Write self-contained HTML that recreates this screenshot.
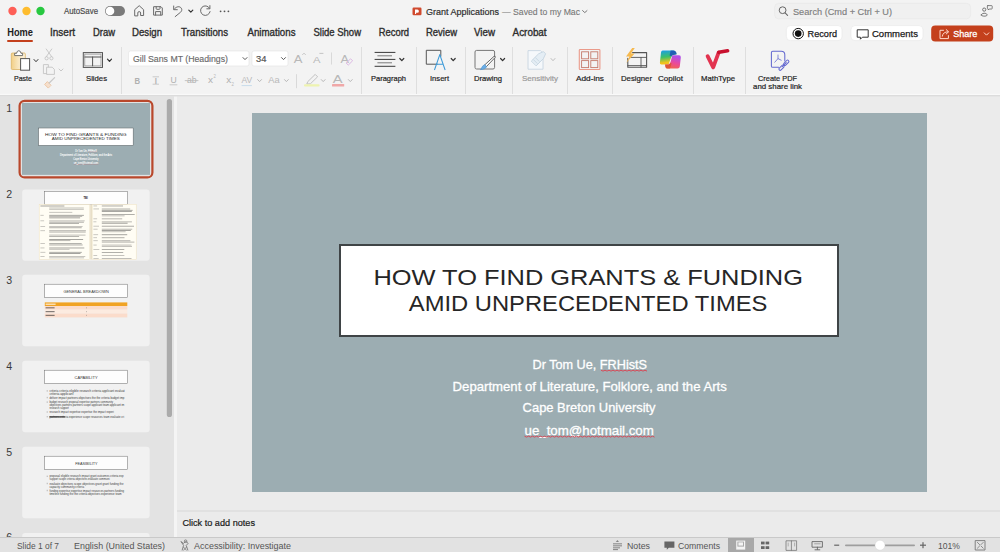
<!DOCTYPE html>
<html><head><meta charset="utf-8"><title>PowerPoint</title>
<style>html,body{margin:0;padding:0;width:1000px;height:552px;overflow:hidden;background:#ebebeb;font-family:"Liberation Sans",sans-serif}svg{display:block}</style>
</head><body>
<svg width="1000" height="552" viewBox="0 0 1000 552">
<rect x="0" y="0" width="1000" height="552" rx="0" fill="#ebebeb"/>
<rect x="0" y="0" width="1000" height="95" rx="0" fill="#f3f3f3"/>
<rect x="0" y="93.8" width="1000" height="1.2" rx="0" fill="#f9f9f9"/>
<rect x="0" y="95" width="1000" height="1.6" rx="0" fill="#dcdcdc"/>
<rect x="0" y="96.6" width="174" height="441" rx="0" fill="#e3e3e3"/>
<rect x="174" y="96.6" width="3" height="441" rx="0" fill="#f4f4f4"/>
<rect x="177" y="96.6" width="823" height="441" rx="0" fill="#ebebeb"/>
<rect x="177" y="510.5" width="823" height="1" rx="0" fill="#d8d8d8"/>
<circle cx="12.5" cy="11" r="4.2" fill="#fe5f57"/>
<circle cx="26.5" cy="11" r="4.2" fill="#febc2e"/>
<circle cx="40.5" cy="11" r="4.2" fill="#28c840"/>
<text x="64" y="13.9" font-size="8.4" fill="#4a4a4a" font-weight="normal" font-family="Liberation Sans" textLength="34" lengthAdjust="spacingAndGlyphs" stroke="#4a4a4a" stroke-width="0.18">AutoSave</text>
<rect x="105" y="6" width="20" height="10" rx="5" fill="#7a7a7a"/>
<circle cx="110" cy="11" r="4.3" fill="#fff"/>
<rect x="413" y="8" width="8" height="7" rx="1" fill="#c5422a"/>
<text x="426" y="15.2" font-size="9.7" fill="#2e2e2e" font-weight="normal" font-family="Liberation Sans" textLength="73" lengthAdjust="spacingAndGlyphs" stroke="#2e2e2e" stroke-width="0.2">Grant Applications</text>
<text x="502" y="15.2" font-size="9.7" fill="#777" font-weight="normal" font-family="Liberation Sans" textLength="78" lengthAdjust="spacingAndGlyphs" stroke="#777" stroke-width="0.12">— Saved to my Mac</text>
<path d="M582.6,10.6 L584.8,12.6 L587,10.6" fill="none" stroke="#777" stroke-width="1" stroke-linecap="round"/>
<rect x="774.6" y="3.4" width="196" height="15.4" rx="4" fill="#f0f0f0" stroke="#e5e5e5" stroke-width="0.6"/>
<text x="793" y="15.2" font-size="9" fill="#7e7e7e" font-weight="normal" font-family="Liberation Sans" textLength="99" lengthAdjust="spacingAndGlyphs" stroke="#7e7e7e" stroke-width="0.15">Search (Cmd + Ctrl + U)</text>
<text x="7.3" y="35.8" font-size="10.2" fill="#1e1e1e" font-weight="bold" font-family="Liberation Sans" textLength="25.7" lengthAdjust="spacingAndGlyphs">Home</text>
<text x="50" y="35.8" font-size="10.2" fill="#2e2e2e" font-weight="normal" font-family="Liberation Sans" textLength="25" lengthAdjust="spacingAndGlyphs" stroke="#2e2e2e" stroke-width="0.35">Insert</text>
<text x="93" y="35.8" font-size="10.2" fill="#2e2e2e" font-weight="normal" font-family="Liberation Sans" textLength="22" lengthAdjust="spacingAndGlyphs" stroke="#2e2e2e" stroke-width="0.35">Draw</text>
<text x="132" y="35.8" font-size="10.2" fill="#2e2e2e" font-weight="normal" font-family="Liberation Sans" textLength="30" lengthAdjust="spacingAndGlyphs" stroke="#2e2e2e" stroke-width="0.35">Design</text>
<text x="181" y="35.8" font-size="10.2" fill="#2e2e2e" font-weight="normal" font-family="Liberation Sans" textLength="47" lengthAdjust="spacingAndGlyphs" stroke="#2e2e2e" stroke-width="0.35">Transitions</text>
<text x="247.5" y="35.8" font-size="10.2" fill="#2e2e2e" font-weight="normal" font-family="Liberation Sans" textLength="48.0" lengthAdjust="spacingAndGlyphs" stroke="#2e2e2e" stroke-width="0.35">Animations</text>
<text x="313.5" y="35.8" font-size="10.2" fill="#2e2e2e" font-weight="normal" font-family="Liberation Sans" textLength="47.5" lengthAdjust="spacingAndGlyphs" stroke="#2e2e2e" stroke-width="0.35">Slide Show</text>
<text x="378.7" y="35.8" font-size="10.2" fill="#2e2e2e" font-weight="normal" font-family="Liberation Sans" textLength="30.30000000000001" lengthAdjust="spacingAndGlyphs" stroke="#2e2e2e" stroke-width="0.35">Record</text>
<text x="426" y="35.8" font-size="10.2" fill="#2e2e2e" font-weight="normal" font-family="Liberation Sans" textLength="31" lengthAdjust="spacingAndGlyphs" stroke="#2e2e2e" stroke-width="0.35">Review</text>
<text x="474" y="35.8" font-size="10.2" fill="#2e2e2e" font-weight="normal" font-family="Liberation Sans" textLength="21" lengthAdjust="spacingAndGlyphs" stroke="#2e2e2e" stroke-width="0.35">View</text>
<text x="512.6" y="35.8" font-size="10.2" fill="#2e2e2e" font-weight="normal" font-family="Liberation Sans" textLength="34.0" lengthAdjust="spacingAndGlyphs" stroke="#2e2e2e" stroke-width="0.35">Acrobat</text>
<rect x="7" y="40" width="26" height="2" rx="1" fill="#c4401c"/>
<rect x="786.4" y="25.6" width="55.6" height="15" rx="4" fill="#ffffff" stroke="#e6e6e6" stroke-width="0.6"/>
<rect x="851" y="25.6" width="72" height="15" rx="4" fill="#ffffff" stroke="#e6e6e6" stroke-width="0.6"/>
<rect x="931.2" y="25.4" width="62" height="16.2" rx="4" fill="#c4401c"/>
<text x="807.6" y="37.2" font-size="9.8" fill="#1a1a1a" font-weight="normal" font-family="Liberation Sans" textLength="29.399999999999977" lengthAdjust="spacingAndGlyphs" stroke="#1a1a1a" stroke-width="0.25">Record</text>
<text x="872" y="37.2" font-size="9.8" fill="#1a1a1a" font-weight="normal" font-family="Liberation Sans" textLength="46" lengthAdjust="spacingAndGlyphs" stroke="#1a1a1a" stroke-width="0.25">Comments</text>
<text x="953.2" y="37.2" font-size="9.8" fill="#fff" font-weight="normal" font-family="Liberation Sans" textLength="24.199999999999932" lengthAdjust="spacingAndGlyphs" stroke="#fff" stroke-width="0.3">Share</text>
<text x="14" y="81" font-size="8.0" fill="#1e1e1e" font-weight="normal" font-family="Liberation Sans" textLength="18" lengthAdjust="spacingAndGlyphs" stroke="#1e1e1e" stroke-width="0.2">Paste</text>
<text x="86" y="81" font-size="8.0" fill="#1e1e1e" font-weight="normal" font-family="Liberation Sans" textLength="21" lengthAdjust="spacingAndGlyphs" stroke="#1e1e1e" stroke-width="0.2">Slides</text>
<text x="371" y="81" font-size="8.0" fill="#1e1e1e" font-weight="normal" font-family="Liberation Sans" textLength="35" lengthAdjust="spacingAndGlyphs" stroke="#1e1e1e" stroke-width="0.2">Paragraph</text>
<text x="430" y="81" font-size="8.0" fill="#1e1e1e" font-weight="normal" font-family="Liberation Sans" textLength="19" lengthAdjust="spacingAndGlyphs" stroke="#1e1e1e" stroke-width="0.2">Insert</text>
<text x="474" y="81" font-size="8.0" fill="#1e1e1e" font-weight="normal" font-family="Liberation Sans" textLength="28" lengthAdjust="spacingAndGlyphs" stroke="#1e1e1e" stroke-width="0.2">Drawing</text>
<text x="576" y="81" font-size="8.0" fill="#1e1e1e" font-weight="normal" font-family="Liberation Sans" textLength="28" lengthAdjust="spacingAndGlyphs" stroke="#1e1e1e" stroke-width="0.2">Add-ins</text>
<text x="621" y="81" font-size="8.0" fill="#1e1e1e" font-weight="normal" font-family="Liberation Sans" textLength="31" lengthAdjust="spacingAndGlyphs" stroke="#1e1e1e" stroke-width="0.2">Designer</text>
<text x="658" y="81" font-size="8.0" fill="#1e1e1e" font-weight="normal" font-family="Liberation Sans" textLength="25" lengthAdjust="spacingAndGlyphs" stroke="#1e1e1e" stroke-width="0.2">Copilot</text>
<text x="701" y="81" font-size="8.0" fill="#1e1e1e" font-weight="normal" font-family="Liberation Sans" textLength="34" lengthAdjust="spacingAndGlyphs" stroke="#1e1e1e" stroke-width="0.2">MathType</text>
<text x="758" y="81" font-size="8.0" fill="#1e1e1e" font-weight="normal" font-family="Liberation Sans" textLength="39" lengthAdjust="spacingAndGlyphs" stroke="#1e1e1e" stroke-width="0.2">Create PDF</text>
<text x="522" y="81" font-size="8.0" fill="#9a9a9a" font-weight="normal" font-family="Liberation Sans" textLength="36" lengthAdjust="spacingAndGlyphs" stroke="#9a9a9a" stroke-width="0.2">Sensitivity</text>
<text x="753" y="88.6" font-size="8.0" fill="#1e1e1e" font-weight="normal" font-family="Liberation Sans" textLength="49" lengthAdjust="spacingAndGlyphs" stroke="#1e1e1e" stroke-width="0.2">and share link</text>
<rect x="72" y="47" width="1" height="47" rx="0" fill="#dedede"/>
<rect x="121" y="47" width="1" height="47" rx="0" fill="#dedede"/>
<rect x="361" y="47" width="1" height="47" rx="0" fill="#dedede"/>
<rect x="416" y="47" width="1" height="47" rx="0" fill="#dedede"/>
<rect x="465" y="47" width="1" height="47" rx="0" fill="#dedede"/>
<rect x="512" y="47" width="1" height="47" rx="0" fill="#dedede"/>
<rect x="567" y="47" width="1" height="47" rx="0" fill="#dedede"/>
<rect x="612" y="47" width="1" height="47" rx="0" fill="#dedede"/>
<rect x="693" y="47" width="1" height="47" rx="0" fill="#dedede"/>
<rect x="745" y="47" width="1" height="47" rx="0" fill="#dedede"/>
<rect x="128.5" y="51" width="120.5" height="15" rx="2" fill="#ffffff" stroke="#e3e3e3" stroke-width="0.6"/>
<text x="133" y="62" font-size="9.5" fill="#6a6a6a" font-weight="normal" font-family="Liberation Sans" textLength="95" lengthAdjust="spacingAndGlyphs" stroke="#6a6a6a" stroke-width="0.15">Gill Sans MT (Headings)</text>
<rect x="252" y="51" width="36" height="15" rx="2" fill="#ffffff" stroke="#e3e3e3" stroke-width="0.6"/>
<text x="256" y="62" font-size="9.5" fill="#555" font-weight="normal" font-family="Liberation Sans" textLength="10.399999999999977" lengthAdjust="spacingAndGlyphs" stroke="#555" stroke-width="0.2">34</text>
<g id="s1">
<rect x="252" y="113" width="675" height="379" rx="0" fill="#9cadb2"/>
<rect x="340" y="245" width="498" height="91" rx="0" fill="#ffffff" stroke="#3f4446" stroke-width="2"/>
<text x="373.4" y="285.3" font-size="22.4" fill="#262626" font-weight="normal" font-family="Liberation Sans" textLength="429.6" lengthAdjust="spacingAndGlyphs">HOW TO FIND GRANTS &amp; FUNDING</text>
<text x="408.8" y="310.8" font-size="22.4" fill="#262626" font-weight="normal" font-family="Liberation Sans" textLength="358.59999999999997" lengthAdjust="spacingAndGlyphs">AMID UNPRECEDENTED TIMES</text>
<text x="532.5" y="369" font-size="13.5" fill="#ffffff" font-weight="normal" font-family="Liberation Sans" textLength="114.5" lengthAdjust="spacingAndGlyphs" stroke="#ffffff" stroke-width="0.3">Dr Tom Ue, FRHistS</text>
<text x="452.6" y="390.5" font-size="13.5" fill="#ffffff" font-weight="normal" font-family="Liberation Sans" textLength="274.19999999999993" lengthAdjust="spacingAndGlyphs" stroke="#ffffff" stroke-width="0.3">Department of Literature, Folklore, and the Arts</text>
<text x="522.6" y="412.4" font-size="13.5" fill="#ffffff" font-weight="normal" font-family="Liberation Sans" textLength="133.0" lengthAdjust="spacingAndGlyphs" stroke="#ffffff" stroke-width="0.3">Cape Breton University</text>
<text x="524.5" y="434.6" font-size="13.5" fill="#ffffff" font-weight="normal" font-family="Liberation Sans" textLength="129.29999999999995" lengthAdjust="spacingAndGlyphs" stroke="#ffffff" stroke-width="0.3">ue_tom@hotmail.com</text>
<path d="M601,370.2 L603.0,371.1 L605.0,370.2 L607.0,371.1 L609.0,370.2 L611.0,371.1 L613.0,370.2 L615.0,371.1 L617.0,370.2 L619.0,371.1 L621.0,370.2 L623.0,371.1 L625.0,370.2 L627.0,371.1 L629.0,370.2 L631.0,371.1 L633.0,370.2 L635.0,371.1 L637.0,370.2 L639.0,371.1 L641.0,370.2 L643.0,371.1 L645.0,370.2 L647.0,371.1" fill="none" stroke="#d64a58" stroke-width="1"/>
<path d="M524.5,436.2 L526.5,437.1 L528.5,436.2 L530.5,437.1 L532.5,436.2 L534.5,437.1 L536.5,436.2 L538.5,437.1 L540.5,436.2 L542.5,437.1 L544.5,436.2 L546.5,437.1 L548.5,436.2 L550.5,437.1 L552.5,436.2 L554.5,437.1 L556.5,436.2 L558.5,437.1 L560.5,436.2 L562.5,437.1 L564.5,436.2 L566.5,437.1 L568.5,436.2 L570.5,437.1 L572.5,436.2 L574.5,437.1 L576.5,436.2 L578.5,437.1 L580.5,436.2 L582.5,437.1 L584.5,436.2 L586.5,437.1 L588.5,436.2 L590.5,437.1 L592.5,436.2 L594.5,437.1 L596.5,436.2 L598.5,437.1 L600.5,436.2 L602.5,437.1 L604.5,436.2 L606.5,437.1 L608.5,436.2 L610.5,437.1 L612.5,436.2 L614.5,437.1 L616.5,436.2 L618.5,437.1 L620.5,436.2 L622.5,437.1 L624.5,436.2 L626.5,437.1 L628.5,436.2 L630.5,437.1 L632.5,436.2 L634.5,437.1 L636.5,436.2 L638.5,437.1 L640.5,436.2 L642.5,437.1 L644.5,436.2 L646.5,437.1 L648.5,436.2 L650.5,437.1 L652.5,436.2 L654.5,437.1" fill="none" stroke="#d64a58" stroke-width="1"/>
</g>
<text x="182.4" y="526" font-size="9.6" fill="#1a1a1a" font-weight="normal" font-family="Liberation Sans" textLength="72.6" lengthAdjust="spacingAndGlyphs" stroke="#1a1a1a" stroke-width="0.2">Click to add notes</text>
<path d="M134.7,15.5 V9.7 L139.2,5.7 L143.6,9.7 V15.5 H140.6 V13 A1.4,1.4 0 0 0 137.8,13 V15.5 Z" fill="none" stroke="#6a6a6a" stroke-width="1" stroke-linecap="round" stroke-linejoin="round"/>
<path d="M154,6.7 H161 L162.3,8 V15.1 H154 Z" fill="none" stroke="#6a6a6a" stroke-width="1" stroke-linecap="round" stroke-linejoin="round"/>
<path d="M156.2,6.8 V8.6 Q156.2,9.3 156.9,9.3 H159.3 Q160,9.3 160,8.6 V6.8" fill="none" stroke="#6a6a6a" stroke-width="1" stroke-linecap="round" stroke-linejoin="round"/>
<path d="M155.6,15 V11.6 H160.7 V15" fill="none" stroke="#6a6a6a" stroke-width="1" stroke-linecap="round" stroke-linejoin="round"/>
<path d="M174.2,9.2 C176,6.4 179.8,5.8 181.3,8.2 C182.3,9.8 181.6,11.2 180.6,12.2 L175.2,16.6" fill="none" stroke="#6a6a6a" stroke-width="1" stroke-linecap="round" stroke-linejoin="round"/>
<path d="M173.7,6 V9.7 H177.3" fill="none" stroke="#6a6a6a" stroke-width="1" stroke-linecap="round" stroke-linejoin="round"/>
<path d="M188.8,10.2 L190.8,12.2 L192.8,10.2" fill="none" stroke="#333" stroke-width="1.2" stroke-linecap="round" stroke-linejoin="round"/>
<path d="M209.6,8.3 A4.8,4.8 0 1 0 210.1,11.6" fill="none" stroke="#6a6a6a" stroke-width="1" stroke-linecap="round" stroke-linejoin="round"/>
<path d="M209.9,5.6 V8.8 H206.8" fill="none" stroke="#6a6a6a" stroke-width="1" stroke-linecap="round" stroke-linejoin="round"/>
<circle cx="220.6" cy="11.3" r="0.9" fill="#555"/>
<circle cx="224.5" cy="11.3" r="0.9" fill="#555"/>
<circle cx="228.4" cy="11.3" r="0.9" fill="#555"/>
<rect x="412.5" y="7.6" width="9" height="7.6" rx="1.2" fill="#d04a2e"/>
<path d="M415,9.6 h2.3 a1.6,1.6 0 0 1 0,3.2 h-1.2 v1.3 h-1.1 z" fill="#fff"/>
<circle cx="782.6" cy="10.2" r="3.4" fill="none" stroke="#666" stroke-width="1"/>
<path d="M785.1,12.8 L787.6,15.4" fill="none" stroke="#666" stroke-width="1.1" stroke-linecap="round" stroke-linejoin="round"/>
<circle cx="984.2" cy="9.6" r="1.6" fill="none" stroke="#666" stroke-width="0.9"/>
<path d="M981.3,15 C981.3,12.6 987.1,12.6 987.1,15 C987.1,16.6 981.3,16.6 981.3,15 Z" fill="none" stroke="#666" stroke-width="0.9" stroke-linecap="round" stroke-linejoin="round"/>
<path d="M987.8,5.6 H991.6 Q992.2,5.6 992.2,6.2 V8.4 Q992.2,9 991.6,9 H989.2 L988.3,10 V9 Q987.4,9 987.4,8.4 V6.2 Q987.4,5.6 987.8,5.6 Z" fill="none" stroke="#666" stroke-width="0.8" stroke-linecap="round" stroke-linejoin="round"/>
<circle cx="798.2" cy="33.6" r="5.2" fill="none" stroke="#111" stroke-width="1"/>
<circle cx="798.2" cy="33.6" r="3.3" fill="#111"/>
<path d="M857.6,29.8 H868.2 V37.2 H862.4 L860.4,39.2 V37.2 H857.6 Z" fill="none" stroke="#333" stroke-width="1" stroke-linecap="round" stroke-linejoin="round"/>
<path d="M943.5,30.3 H940 V38.6 H948.4 V35.6" fill="none" stroke="#ffd9cc" stroke-width="1" stroke-linecap="round" stroke-linejoin="round"/>
<path d="M942.3,36.2 C942.8,33 945,31.8 948,31.8 M946.2,29.6 L948.6,31.8 L946.2,34" fill="none" stroke="#ffd9cc" stroke-width="1" stroke-linecap="round" stroke-linejoin="round"/>
<path d="M984.2,32.85 L986.5,35.15 L988.8,32.85" fill="none" stroke="#ffd9cc" stroke-width="1" stroke-linecap="round" stroke-linejoin="round"/>
<defs><linearGradient id="clipg" x1="0" y1="0" x2="1" y2="0"><stop offset="0" stop-color="#f2cf86"/><stop offset="0.5" stop-color="#f8e6c0"/><stop offset="1" stop-color="#fbf1dc"/></linearGradient></defs>
<rect x="11.3" y="53" width="14" height="16.5" rx="1" fill="url(#clipg)" stroke="#dcb466" stroke-width="0.8"/>
<path d="M14.6,55.2 V53.3 H16.6 Q17,50.7 18.8,50.7 Q20.6,50.7 21,53.3 H22.6 V55.2 Z" fill="#fff" stroke="#666" stroke-width="0.9" stroke-linecap="round" stroke-linejoin="round"/>
<rect x="20.6" y="58.6" width="9" height="11.6" fill="#fff" stroke="#555" stroke-width="1"/>
<path d="M34.0,59.5 L36,61.7 L38.0,59.5" fill="none" stroke="#333" stroke-width="1.0" stroke-linecap="round" stroke-linejoin="round"/>
<path d="M46.2,49 L51.8,56.8 M51.8,49 L46.2,56.8" fill="none" stroke="#c4c4c4" stroke-width="0.9" stroke-linecap="round" stroke-linejoin="round"/>
<circle cx="46.6" cy="58.3" r="1.6" fill="none" stroke="#c4c4c4" stroke-width="0.9"/>
<circle cx="51.4" cy="58.3" r="1.6" fill="none" stroke="#c4c4c4" stroke-width="0.9"/>
<path d="M43.8,64.6 H48.4 V73.6 H43.8 Z" fill="none" stroke="#c4c4c4" stroke-width="0.9" stroke-linecap="round" stroke-linejoin="round"/>
<path d="M47,67.2 H52.2 L54.4,69.4 V74.4 H47 Z" fill="#f3f3f3" stroke="#c4c4c4" stroke-width="0.9" stroke-linecap="round" stroke-linejoin="round"/>
<path d="M59.0,69.0 L61,71.0 L63.0,69.0" fill="none" stroke="#c8c8c8" stroke-width="1" stroke-linecap="round" stroke-linejoin="round"/>
<path d="M48,87.8 L44.6,84.4 L47.4,81.6 L50.8,85 Z" fill="#f6dfcc" stroke="#ecc8a8" stroke-width="1" stroke-linecap="round" stroke-linejoin="round"/>
<path d="M49.2,83 L54.6,77.6" fill="none" stroke="#c8c8c8" stroke-width="1.2" stroke-linecap="round" stroke-linejoin="round"/>
<rect x="83.3" y="52.6" width="19.2" height="14.8" fill="none" stroke="#555" stroke-width="1"/>
<rect x="84.8" y="54.1" width="16.2" height="11.8" fill="none" stroke="#888" stroke-width="0.7"/>
<path d="M84.8,57 H101 M92.6,57 V65.9" fill="none" stroke="#555" stroke-width="1" stroke-linecap="round" stroke-linejoin="round"/>
<path d="M107.5,59.199999999999996 L109.5,61.4 L111.5,59.199999999999996" fill="none" stroke="#333" stroke-width="1.2" stroke-linecap="round" stroke-linejoin="round"/>
<path d="M243.0,57.6 L245,59.6 L247.0,57.6" fill="none" stroke="#555" stroke-width="1" stroke-linecap="round" stroke-linejoin="round"/>
<path d="M281.5,57.6 L283.5,59.6 L285.5,57.6" fill="none" stroke="#555" stroke-width="1" stroke-linecap="round" stroke-linejoin="round"/>
<text x="293.8" y="63" font-size="11" fill="#b8b8b8" font-weight="normal" font-family="Liberation Sans" textLength="8.699999999999989" lengthAdjust="spacingAndGlyphs">A</text>
<path d="M302.6,54.6 L304,53.2 L305.4,54.6" fill="none" stroke="#b8b8b8" stroke-width="0.8" stroke-linecap="round" stroke-linejoin="round"/>
<text x="313" y="63" font-size="9.6" fill="#b8b8b8" font-weight="normal" font-family="Liberation Sans" textLength="7.5" lengthAdjust="spacingAndGlyphs">A</text>
<path d="M319.8,53.4 H323" fill="none" stroke="#b8b8b8" stroke-width="0.8" stroke-linecap="round" stroke-linejoin="round"/>
<rect x="331" y="52.5" width="0.9" height="12" rx="0" fill="#d6d6d6"/>
<text x="340.6" y="63" font-size="10.5" fill="#b8b8b8" font-weight="normal" font-family="Liberation Sans" textLength="8.399999999999977" lengthAdjust="spacingAndGlyphs">A</text>
<path d="M346.4,62.8 L350.6,58.8 L352.6,60.8 L348.6,64.8 Z" fill="none" stroke="#dcb8e4" stroke-width="1" stroke-linecap="round" stroke-linejoin="round"/>
<text x="134.6" y="83.6" font-size="9.2" fill="#b0b0b0" font-weight="bold" font-family="Liberation Sans" textLength="5.599999999999994" lengthAdjust="spacingAndGlyphs">B</text>
<text x="154.2" y="83.6" font-size="9.2" fill="#b0b0b0" font-weight="normal" font-family="Liberation Sans" textLength="3.200000000000017" lengthAdjust="spacingAndGlyphs">I</text>
<path d="M153,84.2 H158.6 M153,76.8 H158.6" fill="none" stroke="#b8b8b8" stroke-width="0.7" stroke-linecap="round" stroke-linejoin="round"/>
<text x="170.4" y="83" font-size="9.2" fill="#b0b0b0" font-weight="normal" font-family="Liberation Sans" textLength="6.199999999999989" lengthAdjust="spacingAndGlyphs">U</text>
<path d="M170,84.8 H177" fill="none" stroke="#b8b8b8" stroke-width="0.7" stroke-linecap="round" stroke-linejoin="round"/>
<text x="187" y="83.4" font-size="9.2" fill="#b0b0b0" font-weight="normal" font-family="Liberation Sans" textLength="9.599999999999994" lengthAdjust="spacingAndGlyphs">ab</text>
<path d="M185.2,80.6 H198" fill="none" stroke="#b8b8b8" stroke-width="0.8" stroke-linecap="round" stroke-linejoin="round"/>
<text x="208" y="83.4" font-size="9.6" fill="#b0b0b0" font-weight="normal" font-family="Liberation Sans" textLength="5" lengthAdjust="spacingAndGlyphs">x</text>
<text x="213.6" y="78.4" font-size="4.6" fill="#b8b8b8" font-weight="normal" font-family="Liberation Sans" textLength="2.4000000000000057" lengthAdjust="spacingAndGlyphs">2</text>
<text x="226.2" y="83.4" font-size="9.6" fill="#b0b0b0" font-weight="normal" font-family="Liberation Sans" textLength="5.0" lengthAdjust="spacingAndGlyphs">x</text>
<text x="231.6" y="86.4" font-size="4.6" fill="#b8b8b8" font-weight="normal" font-family="Liberation Sans" textLength="2.4000000000000057" lengthAdjust="spacingAndGlyphs">2</text>
<text x="241.5" y="82.6" font-size="9.6" fill="#b8b8b8" font-weight="normal" font-family="Liberation Sans" textLength="10.699999999999989" lengthAdjust="spacingAndGlyphs">AV</text>
<path d="M242,85.6 H251.5" fill="none" stroke="#c8dcea" stroke-width="1" stroke-linecap="round" stroke-linejoin="round"/>
<path d="M257.70000000000005,79.6 L259.6,81.6 L261.5,79.6" fill="none" stroke="#b8b8b8" stroke-width="1" stroke-linecap="round" stroke-linejoin="round"/>
<text x="268.2" y="83.4" font-size="9.8" fill="#b8b8b8" font-weight="normal" font-family="Liberation Sans" textLength="11.400000000000034" lengthAdjust="spacingAndGlyphs">Aa</text>
<path d="M284.5,79.6 L286.4,81.6 L288.29999999999995,79.6" fill="none" stroke="#b8b8b8" stroke-width="1" stroke-linecap="round" stroke-linejoin="round"/>
<rect x="296" y="74.2" width="0.9" height="14" rx="0" fill="#d6d6d6"/>
<path d="M308,81.4 L315.2,74.4 L317.6,76.8 L310.4,83.8 L307.2,84 Z" fill="none" stroke="#bcbcbc" stroke-width="0.9" stroke-linecap="round" stroke-linejoin="round"/>
<rect x="304" y="84.2" width="15.6" height="2.4" rx="1" fill="#eef3b0"/>
<path d="M321.3,79.6 L323.2,81.6 L325.09999999999997,79.6" fill="none" stroke="#b8b8b8" stroke-width="1" stroke-linecap="round" stroke-linejoin="round"/>
<text x="332.8" y="82.6" font-size="10" fill="#b8b8b8" font-weight="normal" font-family="Liberation Sans" textLength="9.800000000000011" lengthAdjust="spacingAndGlyphs">A</text>
<rect x="332" y="84" width="12.2" height="2.4" rx="0.5" fill="#f0a8a8"/>
<path d="M348.40000000000003,79.6 L350.3,81.6 L352.2,79.6" fill="none" stroke="#b8b8b8" stroke-width="1" stroke-linecap="round" stroke-linejoin="round"/>
<path d="M375,52.4 H395" fill="none" stroke="#3a3a3a" stroke-width="1" stroke-linecap="round" stroke-linejoin="round"/>
<path d="M377.8,55.8 H391.6" fill="none" stroke="#7a7a7a" stroke-width="1" stroke-linecap="round" stroke-linejoin="round"/>
<path d="M375,59.4 H395" fill="none" stroke="#3a3a3a" stroke-width="1" stroke-linecap="round" stroke-linejoin="round"/>
<path d="M377.8,62.8 H391.6" fill="none" stroke="#7a7a7a" stroke-width="1" stroke-linecap="round" stroke-linejoin="round"/>
<path d="M375,66.3 H395" fill="none" stroke="#3a3a3a" stroke-width="1" stroke-linecap="round" stroke-linejoin="round"/>
<path d="M399.8,58.5 L401.8,60.7 L403.8,58.5" fill="none" stroke="#333" stroke-width="1.2" stroke-linecap="round" stroke-linejoin="round"/>
<path d="M437.2,64.2 H426.3 V50.3 H440.8 V56.2" fill="none" stroke="#555" stroke-width="1" stroke-linecap="round" stroke-linejoin="round"/>
<path d="M434.6,69.6 L439.8,54.6 L445,69.6 M436.6,64.2 H443" fill="none" stroke="#3d9ad8" stroke-width="1.1" stroke-linecap="round" stroke-linejoin="round"/>
<path d="M451.2,58.5 L453.2,60.7 L455.2,58.5" fill="none" stroke="#333" stroke-width="1.2" stroke-linecap="round" stroke-linejoin="round"/>
<rect x="475" y="50.4" width="19.6" height="18.6" rx="1.6" fill="none" stroke="#777" stroke-width="1"/>
<path d="M484.6,65 L494,56.4 Q495.6,55.6 495.2,57.4 L486.4,66.6" fill="#fff" stroke="#555" stroke-width="0.9" stroke-linecap="round" stroke-linejoin="round"/>
<path d="M480.8,69.6 Q482,65.6 484.6,64.6 L486.6,66.6 Q485.6,69.4 480.8,69.6 Z" fill="#6aaee6" stroke="#4a8fcf" stroke-width="0.6" stroke-linecap="round" stroke-linejoin="round"/>
<path d="M500.6,58.5 L502.6,60.7 L504.6,58.5" fill="none" stroke="#333" stroke-width="1.2" stroke-linecap="round" stroke-linejoin="round"/>
<path d="M528.4,50.6 H540.4 L543,53.2 V69.2 H528.4 Z" fill="#f5f8fb" stroke="#c8d6e2" stroke-width="0.9" stroke-linecap="round" stroke-linejoin="round"/>
<path d="M531.6,60.8 L538.6,53.8 L543.4,51.6 L545.6,53.8 L543.4,58.6 L536.4,65.6 Z" fill="#e4edf4" stroke="#c4d4e0" stroke-width="0.9" stroke-linecap="round" stroke-linejoin="round"/>
<path d="M533.6,59.8 L537.2,63.4 M535.6,57.8 L539.2,61.4" fill="none" stroke="#c4d4e0" stroke-width="0.8" stroke-linecap="round" stroke-linejoin="round"/>
<path d="M551.0,58.5 L553,60.7 L555.0,58.5" fill="none" stroke="#bdbdbd" stroke-width="1" stroke-linecap="round" stroke-linejoin="round"/>
<rect x="579.3" y="49.5" width="20.6" height="20" rx="0.8" fill="none" stroke="#ea9a8a" stroke-width="1.1"/>
<rect x="581.6" y="51.8" width="7" height="7" fill="none" stroke="#c47a6c" stroke-width="0.9"/>
<rect x="590.8" y="51.8" width="7" height="7" fill="none" stroke="#c47a6c" stroke-width="0.9"/>
<rect x="581.6" y="60.6" width="7" height="7" fill="none" stroke="#c47a6c" stroke-width="0.9"/>
<rect x="590.8" y="60.6" width="7" height="7" fill="none" stroke="#c47a6c" stroke-width="0.9"/>
<path d="M632.6,52.6 H646.6 V67.2 H627.8 V58.4" fill="none" stroke="#555" stroke-width="1.1" stroke-linecap="round" stroke-linejoin="round"/>
<path d="M630.6,57.4 H646.6 M641,57.4 V67.2 M627.8,65.6 H646.6" fill="none" stroke="#555" stroke-width="0.9" stroke-linecap="round" stroke-linejoin="round"/>
<path d="M632.2,48 L626,56.6 L629.4,56.6 L626.2,63 L634.6,53.4 L631,53.4 L634.8,48 Z" fill="#f6b94f"/>
<defs><linearGradient id="cpl" x1="0" y1="0" x2="0.15" y2="1"><stop offset="0" stop-color="#1a9cec"/><stop offset="0.5" stop-color="#3cc06a"/><stop offset="0.9" stop-color="#f2c21c"/></linearGradient><linearGradient id="cpr" x1="0.3" y1="0" x2="0" y2="1"><stop offset="0" stop-color="#b24ee6"/><stop offset="0.45" stop-color="#ea4a9a"/><stop offset="1" stop-color="#f46a3a"/></linearGradient></defs>
<path d="M662.6,50.5 H673.4 Q675.4,50.5 676.2,52.6 L676.6,54.2 L673.2,55 Q671.8,55.4 671.2,57.2 L668.6,64.4 H661.4 Q659.6,64.4 659.9,62.4 L661,52.4 Q661.3,50.5 662.6,50.5 Z" fill="url(#cpl)"/>
<path d="M670.6,50.5 H673.4 Q675.4,50.5 676.2,52.6 L676.6,54.2 L673.2,55 Q672,55.3 671.4,56.4 L669.6,55.4 Z" fill="#1f4fb8" opacity="0.85"/>
<path d="M673.2,55.2 H679 Q681,55.2 680.8,57.4 L679.8,66.6 Q679.6,68.6 677.6,68.6 H667.6 Q665.8,68.6 665.5,67 L665.1,64.4 L668.6,64.4 Q669.8,64.2 670.4,62.6 L672,56.6 Q672.4,55.2 673.2,55.2 Z" fill="url(#cpr)"/>
<path d="M665.1,64.4 L668.6,64.4 Q669.8,64.2 670.4,62.6 L671.6,63.6 L670,68.6 H667.6 Q665.8,68.6 665.5,67 Z" fill="#d8542e" opacity="0.8"/>
<path d="M707.6,56.2 L713.2,67.4 L718.6,52.6" fill="none" stroke="#e2334f" stroke-width="3.8" stroke-linecap="round" stroke-linejoin="round"/>
<path d="M718.8,52.2 L727.6,50.8" fill="none" stroke="#c8102e" stroke-width="3.6" stroke-linecap="round" stroke-linejoin="round"/>
<path d="M778.6,67.3 H772.8 Q771.4,67.3 771.4,65.9 V52.6 Q771.4,51.2 772.8,51.2 H781.2 Q784.8,51.2 784.8,54.8 V61" fill="none" stroke="#6469d0" stroke-width="1.05" stroke-linecap="round" stroke-linejoin="round"/>
<path d="M778,55 V58.6 L774.8,62.2 M778,58.6 L781.2,60.2" fill="none" stroke="#6469d0" stroke-width="0.8" stroke-linecap="round" stroke-linejoin="round"/>
<path d="M780.2,69 L782.8,66.4" fill="none" stroke="#6469d0" stroke-width="3.6" stroke-linecap="round" stroke-linejoin="round"/>
<path d="M780.2,69 L782.8,66.4" fill="none" stroke="#f3f3f3" stroke-width="1.5" stroke-linecap="round" stroke-linejoin="round"/>
<path d="M784.8,64.2 L787.6,61.4" fill="none" stroke="#6469d0" stroke-width="3.6" stroke-linecap="round" stroke-linejoin="round"/>
<path d="M784.8,64.2 L787.6,61.4" fill="none" stroke="#f3f3f3" stroke-width="1.5" stroke-linecap="round" stroke-linejoin="round"/>
<path d="M782,66.8 L786.2,62.6" fill="none" stroke="#6469d0" stroke-width="1.05" stroke-linecap="round" stroke-linejoin="round"/>
<rect x="166.8" y="99" width="5.2" height="318" rx="2.6" fill="#ababab"/>
<rect x="19.6" y="100.8" width="132.8" height="76.6" rx="5" fill="none" stroke="#b9482c" stroke-width="2.2"/>
<g transform="translate(22,103) scale(0.18962962962962962) translate(-252,-113)"><use href="#s1"/></g>
<text x="9.2" y="112" font-size="10.6" fill="#3a3a3a" text-anchor="middle" font-family="Liberation Sans">1</text>
<rect x="22.2" y="189.4" width="127.4" height="71.4" rx="3" fill="#f1f1f1"/>
<text x="9.2" y="198.2" font-size="10.6" fill="#3a3a3a" text-anchor="middle" font-family="Liberation Sans">2</text>
<rect x="44.6" y="191.4" width="83" height="13.2" fill="#fdfdfd" stroke="#6a6a6a" stroke-width="0.5"/>
<text x="83.4" y="198.8" font-size="3.4" fill="#222" font-weight="bold" font-family="Liberation Sans" textLength="4.3999999999999915" lengthAdjust="spacingAndGlyphs">TBI</text>
<rect x="39.2" y="204.4" width="50.4" height="55" rx="0" fill="#fffdf4" stroke="#efe2bf" stroke-width="0.5"/>
<rect x="92.2" y="204.4" width="44" height="55" rx="0" fill="#fffdf4" stroke="#efe2bf" stroke-width="0.5"/>
<rect x="89.6" y="204.4" width="2.6" height="55" rx="0" fill="#f6efe0"/>
<rect x="90.8" y="204.4" width="0.5" height="55" rx="0" fill="#c8b890"/>
<rect x="40.4" y="205.60" width="24" height="0.8" fill="#333" opacity="0.55"/>
<rect x="49.2" y="207.60" width="34.6" height="0.75" fill="#333" opacity="0.36"/>
<rect x="49.2" y="208.90" width="34.6" height="0.75" fill="#333" opacity="0.37"/>
<rect x="49.2" y="211.90" width="23.1" height="0.75" fill="#333" opacity="0.37"/>
<rect x="40.4" y="214.90" width="3.3" height="0.7" fill="#444" opacity="0.4"/>
<rect x="49.2" y="214.90" width="34.7" height="0.75" fill="#333" opacity="0.56"/>
<rect x="49.2" y="216.20" width="33.0" height="0.75" fill="#333" opacity="0.41"/>
<rect x="49.2" y="217.50" width="30.9" height="0.75" fill="#333" opacity="0.59"/>
<rect x="40.4" y="220.50" width="3.7" height="0.7" fill="#444" opacity="0.4"/>
<rect x="49.2" y="220.50" width="35.5" height="0.75" fill="#333" opacity="0.38"/>
<rect x="49.2" y="221.80" width="34.7" height="0.75" fill="#333" opacity="0.49"/>
<rect x="49.2" y="223.10" width="29.8" height="0.75" fill="#333" opacity="0.49"/>
<rect x="40.4" y="226.10" width="4.7" height="0.7" fill="#444" opacity="0.4"/>
<rect x="49.2" y="226.10" width="33.4" height="0.75" fill="#333" opacity="0.37"/>
<rect x="49.2" y="227.40" width="32.5" height="0.75" fill="#333" opacity="0.49"/>
<rect x="40.4" y="230.40" width="4.6" height="0.7" fill="#444" opacity="0.4"/>
<rect x="49.2" y="230.40" width="36.7" height="0.75" fill="#333" opacity="0.47"/>
<rect x="49.2" y="231.70" width="36.5" height="0.75" fill="#333" opacity="0.44"/>
<rect x="49.2" y="234.70" width="36.3" height="0.75" fill="#333" opacity="0.41"/>
<rect x="49.2" y="236.00" width="29.9" height="0.75" fill="#333" opacity="0.48"/>
<rect x="49.2" y="239.00" width="33.9" height="0.75" fill="#333" opacity="0.60"/>
<rect x="49.2" y="240.30" width="21.2" height="0.75" fill="#333" opacity="0.45"/>
<rect x="40.4" y="243.30" width="4.5" height="0.7" fill="#444" opacity="0.4"/>
<rect x="49.2" y="243.30" width="32.5" height="0.75" fill="#333" opacity="0.52"/>
<rect x="49.2" y="244.60" width="33.5" height="0.75" fill="#333" opacity="0.49"/>
<rect x="40.4" y="247.60" width="4.1" height="0.7" fill="#444" opacity="0.4"/>
<rect x="49.2" y="247.60" width="35.1" height="0.75" fill="#333" opacity="0.55"/>
<rect x="49.2" y="248.90" width="20.3" height="0.75" fill="#333" opacity="0.37"/>
<rect x="40.4" y="251.90" width="5.0" height="0.7" fill="#444" opacity="0.4"/>
<rect x="49.2" y="251.90" width="32.6" height="0.75" fill="#333" opacity="0.53"/>
<rect x="49.2" y="253.20" width="31.3" height="0.75" fill="#333" opacity="0.60"/>
<rect x="40.4" y="256.20" width="4.2" height="0.7" fill="#444" opacity="0.4"/>
<rect x="49.2" y="256.20" width="36.1" height="0.75" fill="#333" opacity="0.36"/>
<rect x="49.2" y="257.50" width="34.9" height="0.75" fill="#333" opacity="0.39"/>
<rect x="93.4" y="205.60" width="3.7" height="0.7" fill="#444" opacity="0.4"/>
<rect x="101.8" y="205.60" width="21.2" height="0.75" fill="#333" opacity="0.53"/>
<rect x="93.4" y="208.60" width="5.6" height="0.7" fill="#444" opacity="0.4"/>
<rect x="101.8" y="208.60" width="28.4" height="0.75" fill="#333" opacity="0.46"/>
<rect x="101.8" y="209.90" width="30.8" height="0.75" fill="#333" opacity="0.57"/>
<rect x="101.8" y="211.20" width="30.0" height="0.75" fill="#333" opacity="0.57"/>
<rect x="101.8" y="214.20" width="32.9" height="0.75" fill="#333" opacity="0.52"/>
<rect x="101.8" y="215.50" width="22.8" height="0.75" fill="#333" opacity="0.41"/>
<rect x="93.4" y="218.50" width="3.7" height="0.7" fill="#444" opacity="0.4"/>
<rect x="101.8" y="218.50" width="20.4" height="0.75" fill="#333" opacity="0.47"/>
<rect x="93.4" y="221.50" width="3.0" height="0.7" fill="#444" opacity="0.4"/>
<rect x="101.8" y="221.50" width="30.1" height="0.75" fill="#333" opacity="0.44"/>
<rect x="101.8" y="222.80" width="25.8" height="0.75" fill="#333" opacity="0.59"/>
<rect x="93.4" y="225.80" width="5.6" height="0.7" fill="#444" opacity="0.4"/>
<rect x="101.8" y="225.80" width="32.2" height="0.75" fill="#333" opacity="0.52"/>
<rect x="93.4" y="228.80" width="4.2" height="0.7" fill="#444" opacity="0.4"/>
<rect x="101.8" y="228.80" width="30.4" height="0.75" fill="#333" opacity="0.45"/>
<rect x="101.8" y="230.10" width="29.0" height="0.75" fill="#333" opacity="0.60"/>
<rect x="101.8" y="231.40" width="23.8" height="0.75" fill="#333" opacity="0.38"/>
<rect x="93.4" y="234.40" width="4.7" height="0.7" fill="#444" opacity="0.4"/>
<rect x="101.8" y="234.40" width="25.4" height="0.75" fill="#333" opacity="0.59"/>
<rect x="93.4" y="237.40" width="3.6" height="0.7" fill="#444" opacity="0.4"/>
<rect x="101.8" y="237.40" width="22.7" height="0.75" fill="#333" opacity="0.51"/>
<rect x="93.4" y="240.40" width="4.4" height="0.7" fill="#444" opacity="0.4"/>
<rect x="101.8" y="240.40" width="28.6" height="0.75" fill="#333" opacity="0.47"/>
<rect x="101.8" y="241.70" width="32.6" height="0.75" fill="#333" opacity="0.47"/>
<rect x="93.4" y="244.70" width="3.3" height="0.7" fill="#444" opacity="0.4"/>
<rect x="101.8" y="244.70" width="29.7" height="0.75" fill="#333" opacity="0.42"/>
<rect x="101.8" y="246.00" width="30.2" height="0.75" fill="#333" opacity="0.39"/>
<rect x="93.4" y="249.00" width="5.9" height="0.7" fill="#444" opacity="0.4"/>
<rect x="101.8" y="249.00" width="22.5" height="0.75" fill="#333" opacity="0.52"/>
<rect x="101.8" y="252.00" width="21.4" height="0.75" fill="#333" opacity="0.51"/>
<rect x="93.4" y="255.00" width="3.8" height="0.7" fill="#444" opacity="0.4"/>
<rect x="101.8" y="255.00" width="22.6" height="0.75" fill="#333" opacity="0.39"/>
<rect x="93.4" y="258.00" width="5.3" height="0.7" fill="#444" opacity="0.4"/>
<rect x="101.8" y="258.00" width="29.7" height="0.75" fill="#333" opacity="0.41"/>
<rect x="22.2" y="274.8" width="127.4" height="71.4" rx="3" fill="#f1f1f1"/>
<text x="9.2" y="284" font-size="10.6" fill="#3a3a3a" text-anchor="middle" font-family="Liberation Sans">3</text>
<rect x="44.6" y="284.2" width="83" height="13.2" fill="#fdfdfd" stroke="#6a6a6a" stroke-width="0.5"/>
<text x="63.4" y="292.6" font-size="3.6" fill="#333" font-weight="normal" font-family="Liberation Sans" textLength="45.4" lengthAdjust="spacingAndGlyphs">GENERAL BREAKDOWN</text>
<rect x="44.8" y="302.4" width="82.5" height="3.6" rx="0" fill="#f0a324"/>
<rect x="44.8" y="306" width="82.5" height="3.7" rx="0" fill="#fbdccb"/>
<rect x="44.8" y="309.7" width="82.5" height="3.8" rx="0" fill="#fcebe0"/>
<rect x="44.8" y="313.5" width="82.5" height="3.9" rx="0" fill="#fbdccb"/>
<rect x="45.6" y="303.6" width="10" height="1.2" rx="0" fill="#fff" opacity="0.8"/>
<rect x="45.6" y="307.2" width="9" height="1.2" rx="0" fill="#333" opacity="0.6"/>
<rect x="86.4" y="307.2" width="0.6" height="1.2" rx="0" fill="#555" opacity="0.5"/>
<rect x="45.6" y="311" width="9" height="1.2" rx="0" fill="#333" opacity="0.6"/>
<rect x="86.4" y="311" width="0.6" height="1.2" rx="0" fill="#555" opacity="0.5"/>
<rect x="45.6" y="314.8" width="9" height="1.2" rx="0" fill="#333" opacity="0.6"/>
<rect x="86.4" y="314.8" width="0.6" height="1.2" rx="0" fill="#555" opacity="0.5"/>
<rect x="22.2" y="360.8" width="127.4" height="71.4" rx="3" fill="#f1f1f1"/>
<text x="9.2" y="370" font-size="10.6" fill="#3a3a3a" text-anchor="middle" font-family="Liberation Sans">4</text>
<rect x="44.6" y="370.2" width="83" height="13.2" fill="#fdfdfd" stroke="#6a6a6a" stroke-width="0.5"/>
<text x="74.6" y="378.6" font-size="3.6" fill="#333" font-weight="normal" font-family="Liberation Sans" textLength="23.0" lengthAdjust="spacingAndGlyphs">CAPABILITY</text>
<text x="49.4" y="392.05" font-size="3.0" fill="#3a3a3a" font-family="Liberation Sans" textLength="75.3" lengthAdjust="spacingAndGlyphs">criteria criteria eligible research criteria applicant evaluat</text>
<text x="49.4" y="394.75" font-size="3.0" fill="#3a3a3a" font-family="Liberation Sans" textLength="23.9" lengthAdjust="spacingAndGlyphs">criteria applicant </text>
<text x="49.4" y="398.75" font-size="3.0" fill="#3a3a3a" font-family="Liberation Sans" textLength="74.9" lengthAdjust="spacingAndGlyphs">deliver impact partners objectives the the criteria budget imp</text>
<text x="49.4" y="403.25" font-size="3.0" fill="#3a3a3a" font-family="Liberation Sans" textLength="63.6" lengthAdjust="spacingAndGlyphs">budget research proposal expertise partners community</text>
<text x="49.4" y="405.95" font-size="3.0" fill="#3a3a3a" font-family="Liberation Sans" textLength="74.9" lengthAdjust="spacingAndGlyphs">objectives partners partners scope applicant team applicant im</text>
<text x="49.4" y="409.35" font-size="3.0" fill="#3a3a3a" font-family="Liberation Sans" textLength="19.4" lengthAdjust="spacingAndGlyphs">research support</text>
<text x="49.4" y="413.15" font-size="3.0" fill="#3a3a3a" font-family="Liberation Sans" textLength="64.5" lengthAdjust="spacingAndGlyphs">research impact expertise expertise the impact experi</text>
<text x="49.4" y="417.85" font-size="3.0" fill="#3a3a3a" font-family="Liberation Sans" textLength="74.6" lengthAdjust="spacingAndGlyphs">partners criteria experience scope resources team evaluate cri</text>
<rect x="46.6" y="390.2" width="1.4" height="1.4" rx="0" fill="#aaa" opacity="0.6"/>
<rect x="46.6" y="396.90000000000003" width="1.4" height="1.4" rx="0" fill="#aaa" opacity="0.6"/>
<rect x="46.6" y="401.40000000000003" width="1.4" height="1.4" rx="0" fill="#aaa" opacity="0.6"/>
<rect x="46.6" y="411.3" width="1.4" height="1.4" rx="0" fill="#aaa" opacity="0.6"/>
<rect x="46.6" y="416.0" width="1.4" height="1.4" rx="0" fill="#aaa" opacity="0.6"/>
<rect x="49.4" y="416" width="15.4" height="1.6" rx="0" fill="#222" opacity="0.6"/>
<rect x="22.2" y="446.8" width="127.4" height="71.4" rx="3" fill="#f1f1f1"/>
<text x="9.2" y="456" font-size="10.6" fill="#3a3a3a" text-anchor="middle" font-family="Liberation Sans">5</text>
<rect x="44.6" y="456.2" width="83" height="13.2" fill="#fdfdfd" stroke="#6a6a6a" stroke-width="0.5"/>
<text x="75.2" y="464.6" font-size="3.6" fill="#333" font-weight="normal" font-family="Liberation Sans" textLength="22.39999999999999" lengthAdjust="spacingAndGlyphs">FEASIBILITY</text>
<text x="49.4" y="477.45" font-size="3.0" fill="#3a3a3a" font-family="Liberation Sans" textLength="74.1" lengthAdjust="spacingAndGlyphs">proposal eligible research impact grant outcomes criteria exp</text>
<text x="49.4" y="480.15" font-size="3.0" fill="#3a3a3a" font-family="Liberation Sans" textLength="60.1" lengthAdjust="spacingAndGlyphs">support scope criteria objectives evaluate communi</text>
<text x="49.4" y="484.65" font-size="3.0" fill="#3a3a3a" font-family="Liberation Sans" textLength="74.1" lengthAdjust="spacingAndGlyphs">evaluate objectives scope objectives grant grant funding the </text>
<text x="49.4" y="487.55" font-size="3.0" fill="#3a3a3a" font-family="Liberation Sans" textLength="34.6" lengthAdjust="spacingAndGlyphs">capacity community criteria </text>
<text x="49.4" y="491.65" font-size="3.0" fill="#3a3a3a" font-family="Liberation Sans" textLength="74.6" lengthAdjust="spacingAndGlyphs">funding expertise expertise impact resources partners funding </text>
<text x="49.4" y="495.05" font-size="3.0" fill="#3a3a3a" font-family="Liberation Sans" textLength="72.2" lengthAdjust="spacingAndGlyphs">timeline funding the the criteria objectives experience team</text>
<rect x="46.6" y="475.6" width="1.4" height="1.4" rx="0" fill="#aaa" opacity="0.6"/>
<rect x="46.6" y="482.8" width="1.4" height="1.4" rx="0" fill="#aaa" opacity="0.6"/>
<rect x="46.6" y="489.8" width="1.4" height="1.4" rx="0" fill="#aaa" opacity="0.6"/>
<rect x="22.2" y="533" width="127.4" height="71.4" rx="3" fill="#f1f1f1"/>
<text x="9.2" y="541" font-size="10.6" fill="#3a3a3a" text-anchor="middle" font-family="Liberation Sans">6</text>
<rect x="0" y="537" width="1000" height="15" rx="0" fill="#e2e2e2"/>
<rect x="0" y="537" width="1000" height="1" rx="0" fill="#c9c9c9"/>
<text x="17" y="548.5" font-size="8.6" fill="#555" font-weight="normal" font-family="Liberation Sans" textLength="42" lengthAdjust="spacingAndGlyphs">Slide 1 of 7</text>
<text x="74" y="548.5" font-size="8.6" fill="#555" font-weight="normal" font-family="Liberation Sans" textLength="91" lengthAdjust="spacingAndGlyphs">English (United States)</text>
<text x="194" y="548.5" font-size="8.6" fill="#555" font-weight="normal" font-family="Liberation Sans" textLength="97" lengthAdjust="spacingAndGlyphs">Accessibility: Investigate</text>
<text x="627" y="548.5" font-size="8.6" fill="#555" font-weight="normal" font-family="Liberation Sans" textLength="23" lengthAdjust="spacingAndGlyphs">Notes</text>
<text x="678" y="548.5" font-size="8.6" fill="#555" font-weight="normal" font-family="Liberation Sans" textLength="42" lengthAdjust="spacingAndGlyphs">Comments</text>
<text x="938" y="548.5" font-size="8.6" fill="#555" font-weight="normal" font-family="Liberation Sans" textLength="22" lengthAdjust="spacingAndGlyphs">101%</text>
<path d="M181.2,541.8 L183.4,543.4 L185.8,541.4 L188.2,543.4 L186.2,545.4 L187.8,550 M181.2,541.8 L183.6,545.4 L182.2,550" fill="none" stroke="#777" stroke-width="0.9" stroke-linecap="round" stroke-linejoin="round"/>
<circle cx="185.6" cy="541.2" r="1.3" fill="none" stroke="#777" stroke-width="0.8"/>
<path d="M183.6,547.2 L186.4,550.2 M186.4,547.2 L183.6,550.2" fill="none" stroke="#777" stroke-width="0.8" stroke-linecap="round" stroke-linejoin="round"/>
<path d="M615.8,541.8 L617.4,540.2 L619,541.8 Z" fill="#666"/>
<rect x="613" y="543.4" width="9" height="0.9" rx="0" fill="#777"/>
<rect x="613" y="545.4" width="9" height="0.9" rx="0" fill="#777"/>
<rect x="613" y="547.4" width="7" height="0.9" rx="0" fill="#777"/>
<rect x="613" y="549.2" width="5" height="0.9" rx="0" fill="#777"/>
<path d="M664.4,541.6 H674.4 V547.8 H668.8 L666.8,549.8 V547.8 H664.4 Z" fill="#666"/>
<rect x="728" y="538" width="26" height="14" rx="0" fill="#a8a8a8"/>
<rect x="736.2" y="540.6" width="9" height="9" rx="0" fill="#f4f4f4"/>
<rect x="737.4" y="541.6" width="6.6" height="5" rx="0" fill="#a8a8a8"/>
<rect x="738.4" y="542.4" width="4.6" height="3.2" rx="0" fill="#f4f4f4"/>
<rect x="761" y="541.6" width="3.6" height="2.8" rx="0" fill="#666"/>
<rect x="765.6" y="541.6" width="3.6" height="2.8" rx="0" fill="#666"/>
<rect x="761" y="546.2" width="3.6" height="2.8" rx="0" fill="#666"/>
<rect x="765.6" y="546.2" width="3.6" height="2.8" rx="0" fill="#666"/>
<path d="M786.4,540.8 H791.4 V550.4 H786.4 Z M791.4,540.8 H796.6 V550.4 H791.4" fill="none" stroke="#777" stroke-width="0.8" stroke-linecap="round" stroke-linejoin="round"/>
<path d="M788.2,543 V546 M794.6,543 V546" fill="none" stroke="#999" stroke-width="0.7" stroke-linecap="round" stroke-linejoin="round"/>
<path d="M812.4,541.6 H822.4 V547.2 H812.4 Z M817.4,547.2 V549.4 M815,549.8 H819.8" fill="none" stroke="#666" stroke-width="0.9" stroke-linecap="round" stroke-linejoin="round"/>
<path d="M814.6,543.8 H820.2" fill="none" stroke="#888" stroke-width="0.7" stroke-linecap="round" stroke-linejoin="round"/>
<rect x="834.2" y="544.6" width="5" height="1.2" rx="0" fill="#666"/>
<rect x="845" y="544.4" width="70" height="1.8" rx="0.9" fill="#9e9e9e"/>
<circle cx="880" cy="545.2" r="5" fill="#ffffff" stroke="#d0d0d0" stroke-width="0.4"/>
<rect x="920" y="544.6" width="6" height="1.2" rx="0" fill="#666"/>
<rect x="922.4" y="542.2" width="1.2" height="6" rx="0" fill="#666"/>
<path d="M975.6,540.6 H985 V550 H975.6 Z" fill="none" stroke="#777" stroke-width="0.9" stroke-linecap="round" stroke-linejoin="round"/>
<path d="M977.4,542.4 L979.6,544.6 M983.2,542.4 L981,544.6 M977.4,548.2 L979.6,546 M983.2,548.2 L981,546" fill="none" stroke="#777" stroke-width="0.8" stroke-linecap="round" stroke-linejoin="round"/>
</svg>
</body></html>
